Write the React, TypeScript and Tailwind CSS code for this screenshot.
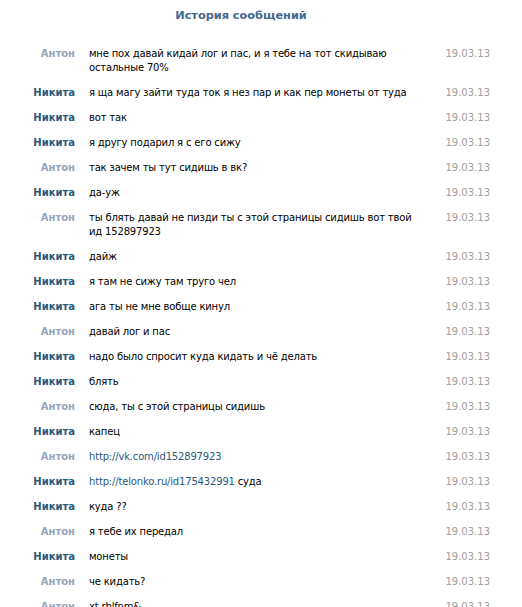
import React from 'react';

interface Message {
  author: 'Антон' | 'Никита';
  lines: React.ReactNode[];
  date: string;
}

const messages: Message[] = [
  { author: 'Антон', lines: ['мне пох давай кидай лог и пас, и я тебе на тот скидываю', 'остальные 70%'], date: '19.03.13' },
  { author: 'Никита', lines: ['я ща магу зайти туда ток я нез пар и как пер монеты от туда'], date: '19.03.13' },
  { author: 'Никита', lines: ['вот так'], date: '19.03.13' },
  { author: 'Никита', lines: ['я другу подарил я с его сижу'], date: '19.03.13' },
  { author: 'Антон', lines: ['так зачем ты тут сидишь в вк?'], date: '19.03.13' },
  { author: 'Никита', lines: ['да-уж'], date: '19.03.13' },
  { author: 'Антон', lines: ['ты блять давай не пизди ты с этой страницы сидишь вот твой', 'ид 152897923'], date: '19.03.13' },
  { author: 'Никита', lines: ['дайж'], date: '19.03.13' },
  { author: 'Никита', lines: ['я там не сижу там труго чел'], date: '19.03.13' },
  { author: 'Никита', lines: ['ага ты не мне вобще кинул'], date: '19.03.13' },
  { author: 'Антон', lines: ['давай лог и пас'], date: '19.03.13' },
  { author: 'Никита', lines: ['надо было спросит куда кидать и чё делать'], date: '19.03.13' },
  { author: 'Никита', lines: ['блять'], date: '19.03.13' },
  { author: 'Антон', lines: ['сюда, ты с этой страницы сидишь'], date: '19.03.13' },
  { author: 'Никита', lines: ['капец'], date: '19.03.13' },
  { author: 'Антон', lines: [<span className="text-[#2b587a]">http://vk.com/id152897923</span>], date: '19.03.13' },
  { author: 'Никита', lines: [<><span className="text-[#2b587a]">http://telonko.ru/id175432991</span> суда</>], date: '19.03.13' },
  { author: 'Никита', lines: ['куда ??'], date: '19.03.13' },
  { author: 'Антон', lines: ['я тебе их передал'], date: '19.03.13' },
  { author: 'Никита', lines: ['монеты'], date: '19.03.13' },
  { author: 'Антон', lines: ['че кидать?'], date: '19.03.13' },
  { author: 'Антон', lines: ['xt rblfnm&'], date: '19.03.13' },
];

export default function App() {
  return (
    <div className="w-[522px] h-[607px] overflow-hidden bg-white font-['DejaVu_Sans',sans-serif] text-[10px]">
      {/* Header */}
      <div className="w-[482px] pt-[8px] pb-[23px] text-center text-[11.3px] font-bold text-[#45688e] leading-[16px]">
        История сообщений
      </div>

      {/* Message list */}
      <div className="flex flex-col">
        {messages.map((m, i) => (
          <div key={i} className="flex items-start pb-[11px] leading-[14px]">
            <div
              className={`w-[75px] shrink-0 text-right font-bold ${
                m.author === 'Антон' ? 'text-[#96a5ba]' : 'text-[#2b587a]'
              }`}
            >
              {m.author}
            </div>
            <div className="w-[357px] shrink-0 pl-[14px] text-black tracking-[-0.17px]">
              {m.lines.map((l, j) => (
                <div key={j}>{l}</div>
              ))}
            </div>
            <div className="w-[58px] shrink-0 text-right text-[#a0a0a0]">{m.date}</div>
          </div>
        ))}
      </div>
    </div>
  );
}
